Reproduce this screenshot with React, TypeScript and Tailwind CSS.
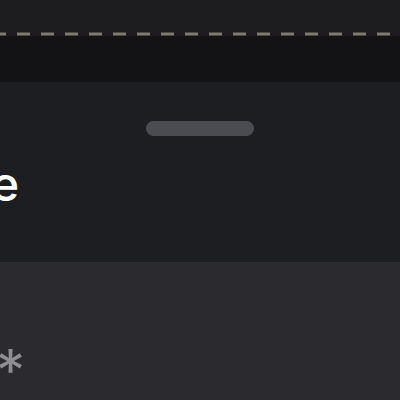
export default function App() {
  return (
    <div className="w-[400px] h-[400px] overflow-hidden bg-[#1d1d20] flex flex-col">
      {/* top bar with dashed rule */}
      <div className="h-[32px] shrink-0" />
      <svg className="block shrink-0" width="400" height="4">
        <line
          x1="0"
          y1="2"
          x2="400"
          y2="2"
          stroke="#7c7b6c"
          strokeWidth="3"
          strokeDasharray="13 11"
          strokeDashoffset="7"
        />
      </svg>
      <div className="h-[46px] shrink-0 bg-[#131316]" />

      {/* bottom sheet */}
      <div className="h-[180px] shrink-0 bg-[#1d1e22] flex flex-col">
        <div className="mt-[39px] mx-auto w-[108px] h-[15px] rounded-full bg-[#4b4c52]" />
        <h2 className="mt-[24px] ml-[-9px] text-[48px] leading-[48px] font-medium text-white font-['Inter',sans-serif]">
          e
        </h2>
      </div>

      {/* field */}
      <div className="flex-1 bg-[#2a2a2f] pt-[78px]">
        <span className="block ml-[-4px] text-[58px] leading-[60px] text-[#8e8e93] font-['Inter',sans-serif]">
          *
        </span>
      </div>
    </div>
  );
}
